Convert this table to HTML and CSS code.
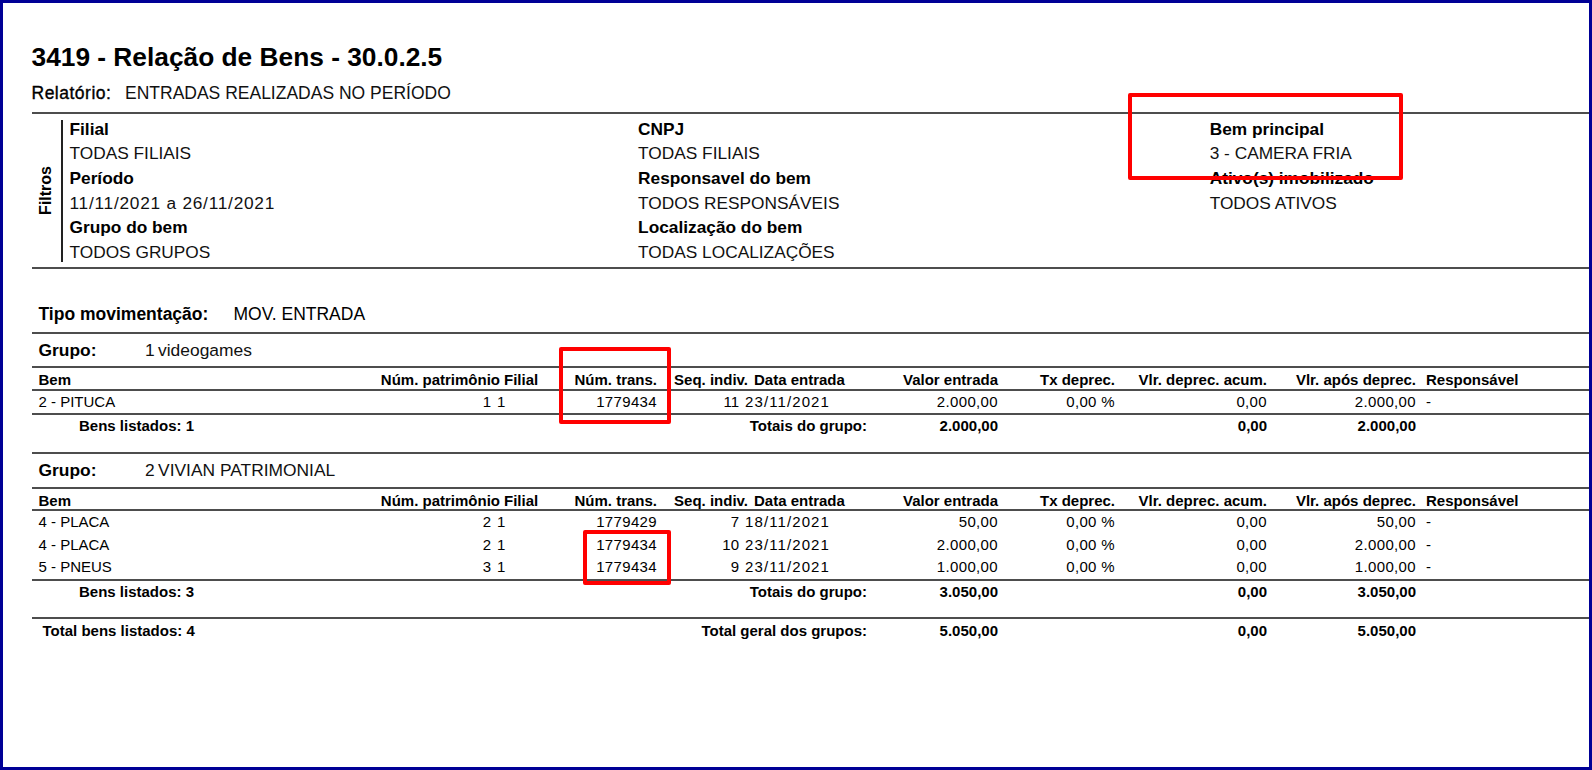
FILE: index.html
```html
<!DOCTYPE html>
<html lang="pt-BR">
<head>
<meta charset="utf-8">
<title>3419 - Relação de Bens</title>
<link rel="stylesheet" href="styles.css">
</head>
<body>
<div class="page">
  <div class="title">3419 - Relação de Bens - 30.0.2.5</div>
  <div class="report-line"><span class="report-label">Relatório:</span><span>ENTRADAS REALIZADAS NO PERÍODO</span></div>

  <div class="filters">
    <div class="filters-tag"><span class="filters-word">Filtros</span></div>
    <div class="filters-rule"></div>
    <div class="filters-body">
      <div class="fcol">
        <div class="flabel">Filial</div>
        <div class="fvalue">TODAS FILIAIS</div>
        <div class="flabel">Período</div>
        <div class="fvalue fdate">11/11/2021 a 26/11/2021</div>
        <div class="flabel">Grupo do bem</div>
        <div class="fvalue">TODOS GRUPOS</div>
      </div>
      <div class="fcol">
        <div class="flabel">CNPJ</div>
        <div class="fvalue">TODAS FILIAIS</div>
        <div class="flabel">Responsavel do bem</div>
        <div class="fvalue">TODOS RESPONSÁVEIS</div>
        <div class="flabel">Localização do bem</div>
        <div class="fvalue">TODAS LOCALIZAÇÕES</div>
      </div>
      <div class="fcol">
        <div class="flabel">Bem principal</div>
        <div class="fvalue">3 - CAMERA FRIA</div>
        <div class="flabel">Ativo(s) imobilizado</div>
        <div class="fvalue">TODOS ATIVOS</div>
      </div>
    </div>
  </div>

  <div class="tipo"><span class="tipo-label">Tipo movimentação:</span><span>MOV. ENTRADA</span></div>

  <section class="group">
    <div class="group-title"><span class="group-label">Grupo:</span><span class="group-num">1</span><span class="group-name">videogames</span></div>
    <div class="trow thead">
      <span class="c-bem">Bem</span>
      <span class="r">Núm. patrimônio</span>
      <span class="c-fil">Filial</span>
      <span class="r">Núm. trans.</span>
      <span class="r c-seq">Seq. indiv.</span>
      <span class="c-data">Data entrada</span>
      <span class="r">Valor entrada</span>
      <span class="r">Tx deprec.</span>
      <span class="r">Vlr. deprec. acum.</span>
      <span class="r">Vlr. após deprec.</span>
      <span class="c-resp">Responsável</span>
    </div>
    <div class="tbody">
      <div class="trow">
        <span class="c-bem">2 - PITUCA</span>
        <span class="r c-pat">1</span>
        <span class="c-filv">1</span>
        <span class="r num">1779434</span>
        <span class="r c-seqv">11</span>
        <span class="c-datav">23/11/2021</span>
        <span class="r num">2.000,00</span>
        <span class="r num">0,00 %</span>
        <span class="r num">0,00</span>
        <span class="r num">2.000,00</span>
        <span class="c-resp">-</span>
      </div>
    </div>
    <div class="totals">
      <div class="tot-labels"><span class="tot-count">Bens listados: 1</span><span>Totais do grupo:</span></div>
      <span class="r">2.000,00</span>
      <span></span>
      <span class="r">0,00</span>
      <span class="r">2.000,00</span>
      <span></span>
    </div>
  </section>

  <section class="group">
    <div class="group-title"><span class="group-label">Grupo:</span><span class="group-num">2</span><span class="group-name">VIVIAN PATRIMONIAL</span></div>
    <div class="trow thead">
      <span class="c-bem">Bem</span>
      <span class="r">Núm. patrimônio</span>
      <span class="c-fil">Filial</span>
      <span class="r">Núm. trans.</span>
      <span class="r c-seq">Seq. indiv.</span>
      <span class="c-data">Data entrada</span>
      <span class="r">Valor entrada</span>
      <span class="r">Tx deprec.</span>
      <span class="r">Vlr. deprec. acum.</span>
      <span class="r">Vlr. após deprec.</span>
      <span class="c-resp">Responsável</span>
    </div>
    <div class="tbody">
      <div class="trow">
        <span class="c-bem">4 - PLACA</span>
        <span class="r c-pat">2</span>
        <span class="c-filv">1</span>
        <span class="r num">1779429</span>
        <span class="r c-seqv">7</span>
        <span class="c-datav">18/11/2021</span>
        <span class="r num">50,00</span>
        <span class="r num">0,00 %</span>
        <span class="r num">0,00</span>
        <span class="r num">50,00</span>
        <span class="c-resp">-</span>
      </div>
      <div class="trow">
        <span class="c-bem">4 - PLACA</span>
        <span class="r c-pat">2</span>
        <span class="c-filv">1</span>
        <span class="r num">1779434</span>
        <span class="r c-seqv">10</span>
        <span class="c-datav">23/11/2021</span>
        <span class="r num">2.000,00</span>
        <span class="r num">0,00 %</span>
        <span class="r num">0,00</span>
        <span class="r num">2.000,00</span>
        <span class="c-resp">-</span>
      </div>
      <div class="trow">
        <span class="c-bem">5 - PNEUS</span>
        <span class="r c-pat">3</span>
        <span class="c-filv">1</span>
        <span class="r num">1779434</span>
        <span class="r c-seqv">9</span>
        <span class="c-datav">23/11/2021</span>
        <span class="r num">1.000,00</span>
        <span class="r num">0,00 %</span>
        <span class="r num">0,00</span>
        <span class="r num">1.000,00</span>
        <span class="c-resp">-</span>
      </div>
    </div>
    <div class="totals">
      <div class="tot-labels"><span class="tot-count">Bens listados: 3</span><span>Totais do grupo:</span></div>
      <span class="r">3.050,00</span>
      <span></span>
      <span class="r">0,00</span>
      <span class="r">3.050,00</span>
      <span></span>
    </div>
  </section>

  <section class="grand">
    <div class="totals grand-row">
      <div class="tot-labels"><span class="grand-count">Total bens listados: 4</span><span>Total geral dos grupos:</span></div>
      <span class="r">5.050,00</span>
      <span></span>
      <span class="r">0,00</span>
      <span class="r">5.050,00</span>
      <span></span>
    </div>
  </section>

  <div class="mark mark-bem"></div>
  <div class="mark mark-trans1"></div>
  <div class="mark mark-trans2"></div>
</div>
</body>
</html>
```

FILE: styles.css
```css
html, body {
  margin: 0;
  padding: 0;
  background: #ffffff;
}

body {
  font-family: "Liberation Sans", Arial, sans-serif;
  color: #000;
}

.page {
  position: relative;
  box-sizing: border-box;
  width: 1592px;
  height: 770px;
  border: 3px solid #000096;
  padding: 39px 0 0 28.5px;
  background: #fff;
  overflow: hidden;
}

.title {
  font-size: 26.3px;
  font-weight: bold;
  line-height: 30px;
}

.report-line {
  margin-top: 8.5px;
  display: flex;
  font-size: 17.5px;
  line-height: 24px;
  color: #111;
}

.report-label {
  width: 93.5px;
  color: #000;
  letter-spacing: 0.5px;
  -webkit-text-stroke: 0.35px #000;
}

/* ---------- Filters ---------- */
.filters {
  margin-top: 7.3px;
  display: flex;
  border-top: 2px solid #4d4d4d;
  border-bottom: 2px solid #4d4d4d;
  padding: 3px 0 2.6px;
}

.filters-tag {
  width: 29.5px;
  display: flex;
  align-items: center;
  justify-content: center;
}

.filters-word {
  writing-mode: vertical-rl;
  transform: rotate(180deg);
  font-size: 16px;
  font-weight: bold;
  line-height: 18px;
}

.filters-rule {
  width: 1.5px;
  background: #222;
  margin: 3.2px 0 2.4px;
}

.filters-body {
  flex: 1;
  display: grid;
  grid-template-columns: 568.6px 571.6px 1fr;
  padding-left: 7px;
  font-size: 17.3px;
  line-height: 24.6px;
}

.flabel {
  font-weight: bold;
}

.fvalue {
  color: #111;
}

.fdate {
  letter-spacing: 0.75px;
}

/* ---------- Tipo ---------- */
.tipo {
  padding: 33px 0 0 7px;
  margin-bottom: 6px;
  font-size: 17.5px;
  line-height: 24px;
  display: flex;
}

.tipo-label {
  width: 195px;
  font-weight: bold;
}

/* ---------- Groups ---------- */
.group,
.grand {
  border-top: 2px solid #4d4d4d;
}

.grand {
  margin-top: -1px;
}

.group-title {
  display: flex;
  padding-left: 7px;
  height: 32.5px;
  line-height: 32.5px;
  font-size: 17.4px;
  border-bottom: 2px solid #4d4d4d;
  color: #111;
}

.group-label {
  width: 106.4px;
  font-weight: bold;
  color: #000;
}

.group-num {
  margin-right: 3.5px;
}

.trow {
  display: grid;
  grid-template-columns: 348.5px 120px 45px 112px 93px 100px 148px 117px 152px 149px 1fr;
  font-size: 15px;
  line-height: 22.5px;
  white-space: nowrap;
}

.thead {
  font-weight: bold;
  padding-top: 4px;
  line-height: 16.3px;
  border-bottom: 2px solid #4d4d4d;
}

.tbody {
  border-bottom: 2px solid #4d4d4d;
}

.r {
  text-align: right;
}

.num {
  letter-spacing: 0.35px;
}

.c-bem {
  padding-left: 7px;
}

.c-pat {
  padding-right: 9px;
}

.c-fil {
  padding-left: 4px;
}

.c-filv {
  margin-left: -3px;
}

.c-seq {
  padding-right: 2px;
}

.c-seqv {
  padding-right: 11px;
}

.c-data {
  padding-left: 4px;
}

.c-datav {
  margin-left: -5px;
  letter-spacing: 1.1px;
}

.c-resp {
  padding-left: 10px;
}

.totals {
  display: grid;
  grid-template-columns: 835.5px 131px 117px 152px 149px 1fr;
  font-size: 15px;
  font-weight: bold;
  line-height: 21.5px;
  padding-bottom: 15.5px;
  white-space: nowrap;
}

.tot-labels {
  display: flex;
  justify-content: space-between;
}

.tot-count {
  padding-left: 47.5px;
}

.grand-row {
  line-height: 23px;
  padding-bottom: 0;
}

.grand-count {
  padding-left: 11px;
}

/* ---------- Red annotation boxes ---------- */
.mark {
  position: absolute;
  box-sizing: border-box;
  border: 4px solid #ff0000;
  border-radius: 2px;
}

.mark-bem {
  left: 1125px;
  top: 90.4px;
  width: 275px;
  height: 86.3px;
}

.mark-trans1 {
  left: 556.4px;
  top: 344.2px;
  width: 111.6px;
  height: 77.2px;
}

.mark-trans2 {
  left: 579.8px;
  top: 527px;
  width: 88.2px;
  height: 54.8px;
}
```
